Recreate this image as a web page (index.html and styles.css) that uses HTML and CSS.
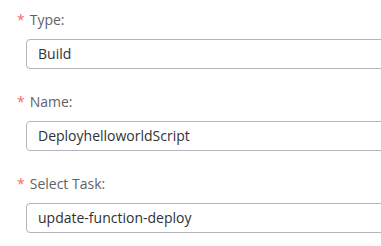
FILE: index.html
```html
<!DOCTYPE html>
<html lang="en">
<head>
    <meta charset="UTF-8">
    <title>Build Step</title>
    <link rel="stylesheet" href="styles.css">
</head>
<body>
    <form class="form">
        <div class="form-item">
            <label class="label"><span class="star">*</span>Type:</label>
            <div class="input">Build</div>
        </div>
        <div class="form-item">
            <label class="label"><span class="star">*</span>Name:</label>
            <div class="input">DeployhelloworldScript</div>
        </div>
        <div class="form-item">
            <label class="label"><span class="star">*</span>Select Task:</label>
            <div class="input">update-function-deploy</div>
        </div>
    </form>
</body>
</html>
```

FILE: styles.css
```css
body {
    font-family: 'Open Sans', 'Noto Sans', sans-serif;
    background-color: #fff;
    margin: 0;
    padding: 0;
    overflow: hidden;
}

.form {
    padding: 10px 0 0 17px;
    width: 420px;
}

.form-item {
    margin-bottom: 23px;
}

.label {
    display: block;
    font-size: 14px;
    line-height: 20px;
    height: 20px;
    color: #606266;
    margin-bottom: 9px;
}

.star {
    color: #f56c6c;
    margin-right: 5px;
}

.input {
    margin-left: 9px;
    height: 28px;
    line-height: 28px;
    border: 1px solid #b4b4bc;
    border-radius: 4px;
    padding: 0 11px;
    font-size: 14px;
    color: #303133;
}
```
